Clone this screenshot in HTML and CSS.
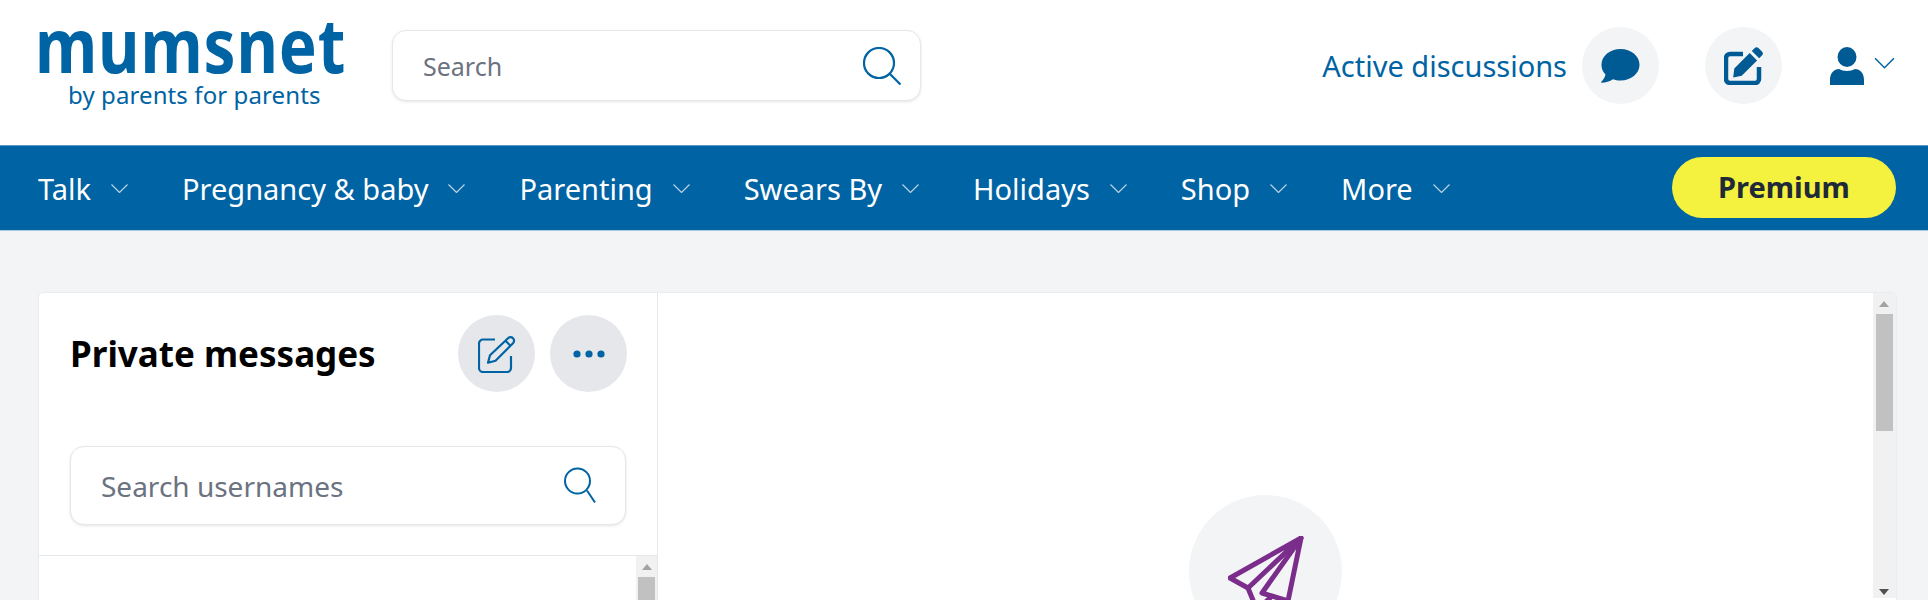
FILE: index.html
```html
<!DOCTYPE html>
<html lang="en">
<head>
    <meta charset="UTF-8">
    <meta name="viewport" content="width=device-width, initial-scale=1.0">
    <title>Private messages | Mumsnet</title>
    <link rel="stylesheet" href="styles.css">
</head>
<body>
    <header class="site-header">
        <a class="logo" href="#">
            <span class="logo-name">mumsnet</span>
            <span class="logo-strap">by parents for parents</span>
        </a>
        <div class="search-box site-search">
            <input class="search-input" type="text" placeholder="Search">
            <svg class="site-search-icon" viewBox="0 0 38 38" fill="none" stroke="currentColor" stroke-width="2.2">
                <circle cx="16" cy="16" r="15"/>
                <path d="M27 27l10.5 10.5"/>
            </svg>
        </div>
        <div class="header-actions">
            <a class="active-link" href="#">Active discussions</a>
            <a class="round-button" href="#">
                <svg class="icon-bubble" viewBox="0 0 39 34" fill="currentColor">
                    <path d="M19.5 0C30 0 38.500 7 38.500 15.800S30 31.600 19.500 31.600c-2.700 0-5.300-.5-7.600-1.300C9 32.400 4.500 33.800.6 33.800c-.5 0-.7-.6-.3-1 2-1.800 3.500-4.200 4.200-7.200C1.700 22.800.5 19.400.5 15.800.5 7 9 0 19.500 0z"/>
                </svg>
            </a>
            <a class="round-button compose-gap" href="#">
                <svg class="icon-pen" viewBox="0 0 39 38" fill="none" stroke="currentColor" stroke-width="4.500">
                    <path d="M19 7H6a4 4 0 0 0-4 4v21a4 4 0 0 0 4 4h25a4 4 0 0 0 4-4V20"/>
                    <path fill="currentColor" stroke="none" d="M30.500 1.200a3 3 0 0 1 4.200 0l3.200 3.200a3 3 0 0 1 0 4.200l-2.700 2.700-7.400-7.400zM25.700 6l7.400 7.400-15.400 15.400-8.500 1.700 1.100-9.100z"/>
                </svg>
            </a>
            <a class="user-menu" href="#">
                <svg class="icon-user" viewBox="0 0 34 38" fill="currentColor">
                    <ellipse cx="17" cy="10" rx="9.500" ry="10"/>
                    <path d="M0 33c0-7 4-11 9-11 2 1 5 2 8 2s6-1 8-2c5 0 9 4 9 11v5H0z"/>
                </svg>
                <svg class="chevron chevron-user" viewBox="0 0 20 11" fill="none" stroke="currentColor" stroke-width="1.400">
                    <path d="M1 1l9 9 9-9"/>
                </svg>
            </a>
        </div>
    </header>

    <nav class="main-nav">
        <a class="nav-item" href="#">Talk<svg class="chevron" viewBox="0 0 17 9" fill="none" stroke="currentColor" stroke-width="1.200"><path d="M.5.5l8 8 8-8"/></svg></a>
        <a class="nav-item" href="#">Pregnancy &amp; baby<svg class="chevron" viewBox="0 0 17 9" fill="none" stroke="currentColor" stroke-width="1.200"><path d="M.5.5l8 8 8-8"/></svg></a>
        <a class="nav-item" href="#">Parenting<svg class="chevron" viewBox="0 0 17 9" fill="none" stroke="currentColor" stroke-width="1.200"><path d="M.5.5l8 8 8-8"/></svg></a>
        <a class="nav-item" href="#">Swears By<svg class="chevron" viewBox="0 0 17 9" fill="none" stroke="currentColor" stroke-width="1.200"><path d="M.5.5l8 8 8-8"/></svg></a>
        <a class="nav-item" href="#">Holidays<svg class="chevron" viewBox="0 0 17 9" fill="none" stroke="currentColor" stroke-width="1.200"><path d="M.5.5l8 8 8-8"/></svg></a>
        <a class="nav-item" href="#">Shop<svg class="chevron" viewBox="0 0 17 9" fill="none" stroke="currentColor" stroke-width="1.200"><path d="M.5.5l8 8 8-8"/></svg></a>
        <a class="nav-item" href="#">More<svg class="chevron" viewBox="0 0 17 9" fill="none" stroke="currentColor" stroke-width="1.200"><path d="M.5.5l8 8 8-8"/></svg></a>
        <a class="premium-button" href="#">Premium</a>
    </nav>

    <main class="page-body">
        <section class="messages-card">
            <div class="threads-column">
                <div class="threads-top">
                    <div class="threads-title-row">
                        <h1 class="threads-title">Private messages</h1>
                        <button class="circle-button">
                            <svg class="icon-new" viewBox="0 0 38 38" fill="none" stroke="currentColor" stroke-width="2.200" stroke-linejoin="round">
                                <path d="M17 4.500H5a4 4 0 0 0-4 4V33a4 4 0 0 0 4 4h24a4 4 0 0 0 4-4V21"/>
                                <path d="M30 3.200a3.500 3.500 0 0 1 5 0 3.500 3.500 0 0 1 0 5L17.500 25.700l-7.500 2 2-7.500z"/>
                                <path d="M27.500 5.700l5 5"/>
                            </svg>
                        </button>
                        <button class="circle-button">
                            <svg class="icon-dots" viewBox="0 0 32 8" fill="currentColor">
                                <circle cx="4" cy="4" r="3.600"/>
                                <circle cx="16" cy="4" r="3.600"/>
                                <circle cx="28" cy="4" r="3.600"/>
                            </svg>
                        </button>
                    </div>
                    <div class="search-box user-search">
                        <input class="search-input" type="text" placeholder="Search usernames">
                        <svg class="user-search-icon" viewBox="0 0 32 38" fill="none" stroke="currentColor" stroke-width="2">
                            <circle cx="13.500" cy="14" r="12.500"/>
                            <path d="M23 23.500l8 12"/>
                        </svg>
                    </div>
                </div>
                <div class="threads-list">
                    <div class="scrollbar">
                        <span class="scroll-up"></span>
                        <span class="scroll-thumb"></span>
                    </div>
                </div>
            </div>
            <div class="conversation-pane">
                <div class="empty-state">
                    <div class="plane-circle">
                        <svg class="icon-plane" viewBox="0 0 76 80" fill="none" stroke="currentColor" stroke-width="5" stroke-linejoin="round" stroke-linecap="round">
                            <path d="M73 2L2 42l18 10L73 2z"/>
                            <path d="M73 2L34 57l26 8L73 2z"/>
                            <path d="M20 52l9 22 14-13"/>
                        </svg>
                    </div>
                </div>
                <div class="scrollbar scrollbar-main">
                    <span class="scroll-up"></span>
                    <span class="scroll-thumb"></span>
                    <span class="scroll-down"></span>
                </div>
            </div>
        </section>
    </main>
</body>
</html>
```

FILE: styles.css
```css
html, body {
    height: 600px;
    overflow: hidden;
}

body {
    margin: 0;
    font-family: "Noto Sans", Arial, sans-serif;
    font-size: 29px;
    color: #111827;
    background-color: #f3f4f6;
}

a {
    color: inherit;
    text-decoration: none;
}

svg {
    display: block;
    flex-shrink: 0;
}

/* header */
.site-header {
    display: flex;
    align-items: center;
    height: 145px;
    padding: 0 32px 14px 38px;
    box-sizing: border-box;
    background-color: #fff;
    color: #0063a3;
}

.logo {
    display: block;
    width: 354px;
    height: 100px;
    flex-shrink: 0;
    margin-top: -7px;
}

.logo-name {
    display: block;
    height: 66px;
    margin-left: -3px;
    font-size: 76px;
    font-weight: 700;
    line-height: 64px;
    letter-spacing: 1px;
    transform: scaleX(0.84);
    transform-origin: left center;
}

.logo-strap {
    display: block;
    margin-left: 30px;
    font-size: 24px;
    line-height: 34px;
    letter-spacing: 0.1px;
}

.search-box {
    display: flex;
    align-items: center;
    background-color: #fff;
    border: 1px solid #e5e7eb;
    border-radius: 14px;
    box-shadow: 0 1px 3px rgba(0, 0, 0, 0.1);
    box-sizing: border-box;
}

.site-search {
    width: 529px;
    height: 71px;
    padding: 0 19px 0 30px;
}

.user-search {
    height: 79px;
    margin-right: 1px;
    padding: 0 29px 0 30px;
    color: #0063a3;
}

.search-input {
    flex: 1;
    min-width: 0;
    padding: 0;
    border: none;
    outline: none;
    background: none;
    font-family: inherit;
    font-size: 28px;
    color: #111827;
}

.site-search .search-input {
    font-size: 25px;
}

.search-input::placeholder {
    color: #6b7280;
    opacity: 1;
}

.site-search-icon {
    width: 38px;
    height: 38px;
}

.user-search-icon {
    width: 32px;
    height: 38px;
}

.header-actions {
    display: flex;
    align-items: center;
    margin-left: auto;
}

.active-link {
    margin-right: 15px;
}

.round-button {
    display: flex;
    align-items: center;
    justify-content: center;
    width: 77px;
    height: 77px;
    border-radius: 50%;
    background-color: #f3f4f6;
    color: #005a94;
}

.compose-gap {
    margin-left: 46px;
}

.icon-bubble {
    width: 39px;
    height: 34px;
}

.icon-pen {
    width: 39px;
    height: 38px;
}

.user-menu {
    display: flex;
    align-items: center;
    margin-left: 48px;
    color: #005a94;
}

.icon-user {
    width: 34px;
    height: 38px;
}

.chevron-user {
    width: 21px;
    height: 12px;
    margin: 0 1px 6px 10px;
    color: #0063a3;
}

/* blue nav */
.main-nav {
    display: flex;
    align-items: center;
    height: 86px;
    padding: 0 32px 0 38px;
    box-sizing: border-box;
    border-top: 1px solid #5a9ac4;
    border-bottom: 1px solid #a9c9df;
    background-color: #0063a3;
    color: #fff;
}

.nav-item {
    display: flex;
    align-items: center;
    margin-right: 54px;
}

.nav-item .chevron {
    width: 17px;
    height: 9px;
    margin-left: 20px;
    color: #b9d3e6;
}

.premium-button {
    display: block;
    width: 224px;
    height: 61px;
    margin: 0 0 1px auto;
    border-radius: 31px;
    background-color: #f5f23f;
    color: #1f2937;
    font-weight: 700;
    line-height: 60px;
    text-align: center;
}

/* messages */
.page-body {
    padding: 62px 32px 0 39px;
}

.messages-card {
    display: flex;
    height: 400px;
    background-color: #fff;
    border-radius: 4px 4px 0 0;
    box-shadow: 0 0 2px rgba(0, 0, 0, 0.12);
}

.threads-column {
    width: 619px;
    flex-shrink: 0;
    border-right: 1px solid #e5e7eb;
    box-sizing: border-box;
}

.threads-top {
    height: 263px;
    padding: 22px 30px 0 31px;
    box-sizing: border-box;
    border-bottom: 1px solid #e5e7eb;
}

.threads-title-row {
    display: flex;
    align-items: center;
    margin-bottom: 54px;
}

.threads-title {
    margin: 0 auto 0 0;
    font-size: 35px;
    font-weight: 700;
    color: #000;
}

.circle-button {
    display: flex;
    align-items: center;
    justify-content: center;
    width: 77px;
    height: 77px;
    margin-left: 15px;
    padding: 0;
    border: none;
    border-radius: 50%;
    background-color: #e5e7eb;
    color: #0063a3;
}

.icon-new {
    width: 38px;
    height: 38px;
}

.icon-dots {
    width: 32px;
    height: 8px;
}

.threads-list {
    display: flex;
    justify-content: flex-end;
    height: 137px;
}

.conversation-pane {
    display: flex;
    flex: 1;
    min-width: 0;
}

.empty-state {
    display: flex;
    flex: 1;
    justify-content: center;
    padding-top: 202px;
}

.plane-circle {
    display: flex;
    align-items: flex-start;
    justify-content: center;
    width: 153px;
    height: 153px;
    padding-top: 41px;
    box-sizing: border-box;
    border-radius: 50%;
    background-color: #f3f4f6;
    color: #7b2d8b;
}

.icon-plane {
    width: 76px;
    height: 80px;
}

/* fake scrollbars, the screenshot has them always on */
.scrollbar {
    display: flex;
    flex-direction: column;
    align-items: center;
    width: 21px;
    background-color: #f1f1f1;
}

.scrollbar-main {
    width: 23px;
    height: 305px;
    padding-right: 1px;
    box-sizing: border-box;
}

.scroll-up, .scroll-down {
    display: block;
    width: 0;
    height: 0;
    border-left: 5px solid transparent;
    border-right: 5px solid transparent;
}

.scroll-up {
    margin-top: 8px;
    border-bottom: 6px solid #a3a3a3;
}

.scroll-thumb {
    display: block;
    width: 17px;
    height: 117px;
    margin-top: 7px;
    background-color: #c1c1c1;
}

.scroll-down {
    margin-top: auto;
    margin-bottom: 3px;
    border-top: 6px solid #505050;
}
```
